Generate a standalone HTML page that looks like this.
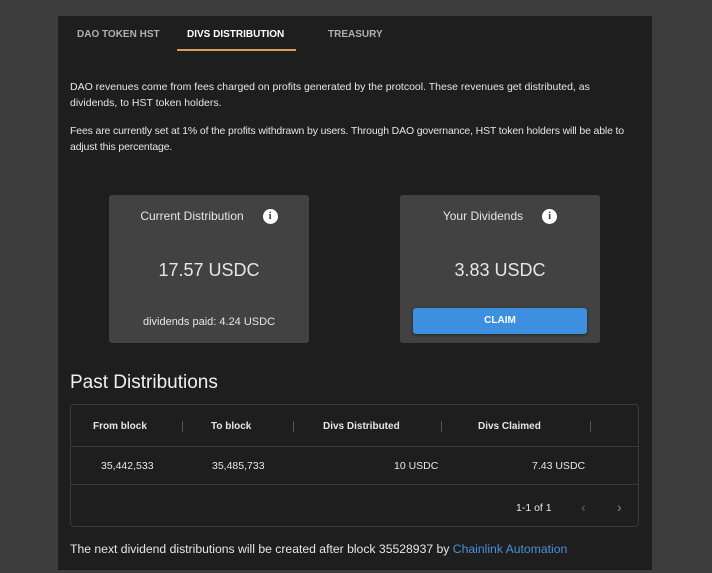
<!DOCTYPE html>
<html><head><style>
*{margin:0;padding:0;box-sizing:border-box}
body{width:712px;height:573px;background:#3d3d3d;font-family:"Liberation Sans",sans-serif;color:#e6e6e6;position:relative;overflow:hidden}
.panel{position:absolute;left:58px;top:16px;width:594px;height:554px;background:#1e1e1e}
.a{position:absolute;white-space:nowrap}
.tab{font-size:10px;font-weight:bold;color:#b0b0b0;top:29px}
p{position:absolute;left:70px;font-size:10.5px;line-height:16px;color:#e6e6e6}
.card{position:absolute;top:195px;width:200px;height:148px;background:#424242;border-radius:3px}
.card .t{position:absolute;top:14px;width:100%;text-align:center;font-size:12px;line-height:15px}
.card .v{position:absolute;top:65px;width:100%;text-align:center;font-size:18px}
.info{display:inline-block;width:15px;height:15px;border-radius:50%;background:#fff;color:#424242;font-size:11px;font-weight:bold;text-align:center;line-height:15px;margin-left:19px;vertical-align:top;font-family:"Liberation Serif",serif}
.tbl{position:absolute;left:70px;top:404px;width:569px;height:123px;border:1px solid #3a3a3a;border-radius:4px}
.hr{position:absolute;left:0;width:100%;height:1px;background:#3a3a3a}
.th{font-size:10px;font-weight:bold;top:16px}
.sep{position:absolute;top:16px;width:1px;height:11px;background:#555}
.td{font-size:10.5px;top:55px}
</style></head><body>
<div class="panel"></div>
<div class="a tab" style="left:77px">DAO TOKEN HST</div>
<div class="a tab" style="left:187px;color:#fff">DIVS DISTRIBUTION</div>
<div class="a tab" style="left:328px">TREASURY</div>
<div class="a" style="left:177px;top:49px;width:119px;height:2px;background:#d79b5a"></div>
<p style="top:79px;width:530px">DAO revenues come from fees charged on profits generated by the protcool. These revenues get distributed, as dividends, to HST token holders.</p>
<p style="top:123px;width:575px;letter-spacing:-0.15px">Fees are currently set at 1% of the profits withdrawn by users. Through DAO governance, HST token holders will be able to adjust this percentage.</p>
<div class="card" style="left:109px"><div class="t">Current Distribution<span class="info">i</span></div><div class="v">17.57 USDC</div><div class="a" style="top:121px;width:100%;text-align:center;font-size:11px">dividends paid: 4.24 USDC</div></div>
<div class="card" style="left:400px"><div class="t">Your Dividends<span class="info">i</span></div><div class="v">3.83 USDC</div><div class="a" style="left:13px;top:113px;width:174px;height:26px;background:#3d8fe0;border-radius:3px;text-align:center;line-height:26px;font-size:10px;font-weight:bold;color:#fff;box-shadow:0 1px 3px rgba(0,0,0,.5)">CLAIM</div></div>
<div class="a" style="left:70px;top:372px;font-size:19px;color:#f0f0f0">Past Distributions</div>
<div class="tbl">
<div class="hr" style="top:41px"></div><div class="hr" style="top:79px"></div>
<div class="a th" style="left:22px">From block</div><div class="sep" style="left:111px"></div>
<div class="a th" style="left:140px">To block</div><div class="sep" style="left:222px"></div>
<div class="a th" style="left:252px">Divs Distributed</div><div class="sep" style="left:370px"></div>
<div class="a th" style="left:407px">Divs Claimed</div><div class="sep" style="left:519px"></div>
<div class="a td" style="left:30px">35,442,533</div>
<div class="a td" style="left:141px">35,485,733</div>
<div class="a td" style="left:323px">10 USDC</div>
<div class="a td" style="left:461px">7.43 USDC</div>
<div class="a" style="left:445px;top:97px;font-size:10.5px">1-1 of 1</div>
<div class="a" style="left:510px;top:94px;font-size:14px;color:#666">&#8249;</div>
<div class="a" style="left:546px;top:94px;font-size:14px;color:#888">&#8250;</div>
</div>
<div class="a" style="left:70px;top:542px;font-size:12.2px">The next dividend distributions will be created after block 35528937 by <span style="color:#4a90d9">Chainlink Automation</span></div>
</body></html>
